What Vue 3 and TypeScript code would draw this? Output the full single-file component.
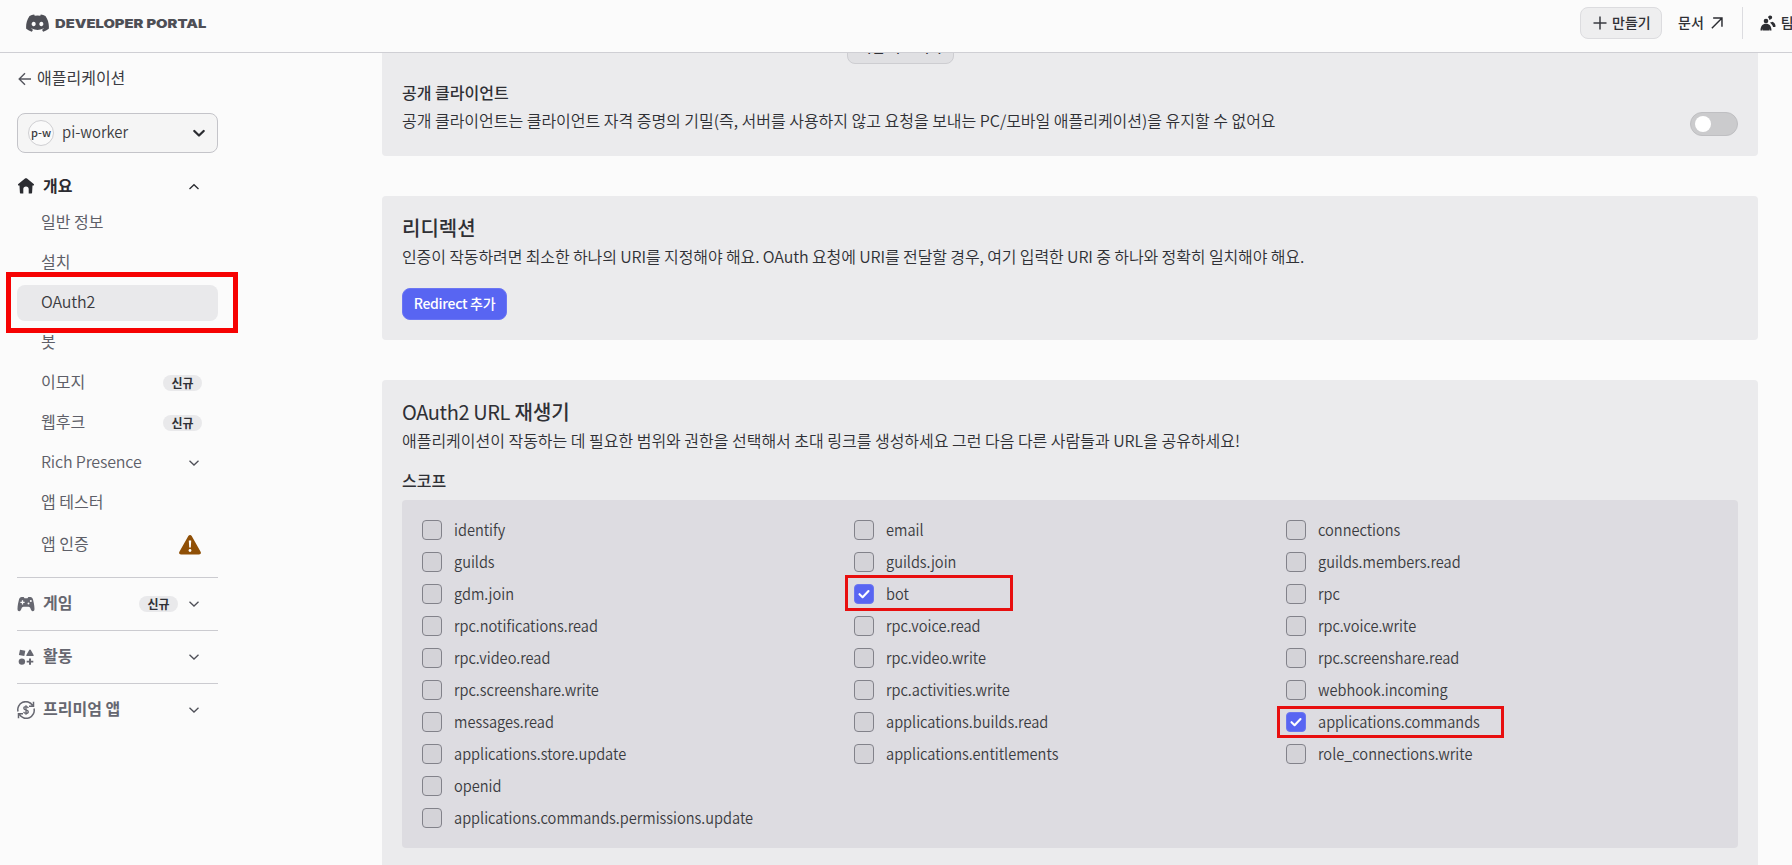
<script setup lang="ts">
import { ref } from 'vue'

interface NavItem {
  label: string
  active?: boolean
  latin?: boolean
  badge?: boolean
  chevron?: boolean
  warning?: boolean
}

interface Scope {
  name: string
  checked?: boolean
  mark?: 'bot' | 'commands'
}

const navItems: NavItem[] = [
  { label: '일반 정보' },
  { label: '설치' },
  { label: 'OAuth2', active: true, latin: true },
  { label: '봇' },
  { label: '이모지', badge: true },
  { label: '웹후크', badge: true },
  { label: 'Rich Presence', chevron: true, latin: true },
  { label: '앱 테스터' },
  { label: '앱 인증', warning: true },
]

const scopes = ref<Scope[][]>([
  [
    { name: 'identify' },
    { name: 'guilds' },
    { name: 'gdm.join' },
    { name: 'rpc.notifications.read' },
    { name: 'rpc.video.read' },
    { name: 'rpc.screenshare.write' },
    { name: 'messages.read' },
    { name: 'applications.store.update' },
    { name: 'openid' },
    { name: 'applications.commands.permissions.update' },
  ],
  [
    { name: 'email' },
    { name: 'guilds.join' },
    { name: 'bot', checked: true, mark: 'bot' },
    { name: 'rpc.voice.read' },
    { name: 'rpc.video.write' },
    { name: 'rpc.activities.write' },
    { name: 'applications.builds.read' },
    { name: 'applications.entitlements' },
  ],
  [
    { name: 'connections' },
    { name: 'guilds.members.read' },
    { name: 'rpc' },
    { name: 'rpc.voice.write' },
    { name: 'rpc.screenshare.read' },
    { name: 'webhook.incoming' },
    { name: 'applications.commands', checked: true, mark: 'commands' },
    { name: 'role_connections.write' },
  ],
])
</script>

<template>
  <div class="page">
    <header class="top">
      <div class="brand">
        <svg class="clyde" viewBox="0 0 24 18" width="23" height="18">
          <path fill="#4e4f56" d="M20.3 1.6A19 19 0 0 0 15.5.1c-.2.4-.5.9-.6 1.3a18 18 0 0 0-5.8 0C8.900 1 8.700.5 8.500.1A19 19 0 0 0 3.700 1.600C.6 6.200-.2 10.700.2 15.100a19 19 0 0 0 5.900 2.900c.5-.6.9-1.300 1.200-2-.7-.3-1.300-.6-1.900-.9l.5-.4a13.700 13.700 0 0 0 12.200 0l.5.4c-.6.3-1.300.6-1.900.9.3.7.8 1.400 1.200 2a19 19 0 0 0 5.900-2.900c.5-5.200-.8-9.600-3.500-13.500ZM8 12.500c-1.200 0-2.100-1.100-2.100-2.400S6.800 7.700 8 7.700s2.200 1.100 2.100 2.400c0 1.300-.9 2.400-2.100 2.400Zm8 0c-1.200 0-2.100-1.100-2.100-2.400s.9-2.400 2.100-2.400 2.200 1.100 2.100 2.400c0 1.300-.9 2.400-2.100 2.400Z" />
        </svg>
        <span class="wordmark">DEVELOPER PORTAL</span>
      </div>
      <nav class="tools">
        <button class="create">
          <svg width="14" height="14" viewBox="0 0 14 14"><path d="M7 .5v13M.5 7h13" stroke="#3a3b42" stroke-width="1.5" /></svg>
          <span>만들기</span>
        </button>
        <a class="docs">
          <span>문서</span>
          <svg width="12" height="12" viewBox="0 0 14 14"><path d="M1 13 12.300 1.700M2.500 1.200h10.300v10.300" fill="none" stroke="#2c2d32" stroke-width="1.700" /></svg>
        </a>
        <span class="rule"></span>
        <a class="team">
          <svg width="16" height="16" viewBox="0 0 16 16" fill="#2c2d32">
            <circle cx="6" cy="6" r="2.300" />
            <path d="M.5 15.500c0-4 2-6.700 5.500-6.700s5.500 2.700 5.500 6.700H9.800l-.4-2v2H2.700v-2l-.5 2Z" />
            <path d="M8.300 1.600a2 2 0 1 1 2.500 2.700L9.300 5C9.300 3.700 8.900 3 8.100 2.500ZM10 7.500c1 0 1.700-.4 2.400-.8 2 .8 3.200 2.600 3.200 4.600 0 .5-.4.7-.8.7h-1.700c-.5-1.600-1.400-2.900-3.100-4.500Z" />
          </svg>
          <span>팀</span>
        </a>
      </nav>
    </header>

    <div class="body">
      <aside class="side">
        <a class="back">
          <svg width="14" height="14" viewBox="0 0 14 14"><path d="M13 7H1.500M7 1.200 1.200 7 7 12.800" fill="none" stroke="#54555d" stroke-width="1.400" /></svg>
          <span>애플리케이션</span>
        </a>
        <div class="picker">
          <span class="avatar">p-w</span>
          <span class="app">pi-worker</span>
          <svg width="14" height="9" viewBox="0 0 14 9"><path d="M2.300 2 7 6.500 11.700 2" fill="none" stroke="#2b2c31" stroke-width="2.300" stroke-linecap="round" stroke-linejoin="round" /></svg>
        </div>

        <div class="group first">
          <svg class="gicon" width="18" height="18" viewBox="0 0 18 18" fill="#2b2c31"><path d="M9 1.200c.4 0 .7.1 1 .4l6.700 5.300c.7.600.3 1.600-.6 1.600h-.6l-.4 7c0 .6-.4 1-1 1h-2.400V12c0-1.600-1-2.600-2.700-2.600S6.300 10.400 6.300 12v4.500H3.900c-.6 0-1-.4-1-1l-.4-7h-.6c-.9 0-1.300-1-.6-1.600L8 1.600c.3-.3.600-.4 1-.4Z" /></svg>
          <span class="gname">개요</span>
          <svg class="chev" width="12" height="8" viewBox="0 0 12 8"><path d="M1.500 6 6 1.700 10.500 6" fill="none" stroke="#2b2c31" stroke-width="1.300" /></svg>
        </div>

        <ul class="items">
          <li v-for="item in navItems" :key="item.label" :class="{ active: item.active, tall: item.warning }">
            <span class="label" :class="{ latin: item.latin }">{{ item.label }}</span>
            <span v-if="item.badge" class="badge">신규</span>
            <svg v-if="item.chevron" class="chev" width="12" height="8" viewBox="0 0 12 8"><path d="M1.500 1.700 6 6l4.500-4.300" fill="none" stroke="#4f5058" stroke-width="1.300" /></svg>
            <svg v-if="item.warning" class="warn" width="22" height="20" viewBox="0 0 22 20">
              <path fill="#8f4f06" d="M9.300 1.100c.8-1.400 2.700-1.400 3.400 0l8.900 15.600c.8 1.400-.1 2.800-1.600 2.800H2c-1.500 0-2.400-1.400-1.600-2.800Z" />
              <path fill="#fff" d="M9.800 5.500h2.400l-.4 7h-1.600Z" /><circle cx="11" cy="15.500" r="1.400" fill="#fff" />
            </svg>
            <span v-if="item.active" class="mark mark-nav"></span>
          </li>
        </ul>

        <div class="group">
          <svg class="gicon" width="18" height="18" viewBox="0 0 18 18">
            <path fill="#666770" d="M4.700 2h2l.8 1.200h3L11.300 2h2c1.400 0 2.300 1 2.700 2.400.7 2.600 1.500 6.400 1.500 9.500 0 1.300-.7 2.300-1.700 2.300-1.400 0-1.800-1.200-2.300-2.600-.4-1.200-1-1.900-2-1.900h-5c-1 0-1.600.7-2 1.900-.5 1.400-.9 2.600-2.300 2.600-1 0-1.700-1-1.700-2.300 0-3.100.8-6.900 1.500-9.500C2.400 3 3.300 2 4.700 2Z" />
            <path d="M5.500 5.200v4.200M3.400 7.300h4.200" stroke="#fbfbfb" stroke-width="1.300" /><circle cx="13.800" cy="6" r="1" fill="#fbfbfb" /><circle cx="11.500" cy="8.500" r="1" fill="#fbfbfb" />
          </svg>
          <span class="gname">게임</span>
          <span class="badge">신규</span>
          <svg class="chev" width="12" height="8" viewBox="0 0 12 8"><path d="M1.500 1.700 6 6l4.500-4.300" fill="none" stroke="#4f5058" stroke-width="1.300" /></svg>
        </div>
        <div class="group">
          <svg class="gicon" width="18" height="18" viewBox="0 0 18 18" fill="#666770">
            <path d="m3 1.800 5.300.9-1 5.300L1.900 7ZM13 1.500c.4 0 .6.2.8.500l2.800 4.900c.3.600 0 1.100-.6 1.100h-6c-.6 0-.9-.5-.6-1.100l2.800-4.900c.2-.3.400-.5.800-.5ZM12 10.500h2v2.200h2.300v1.900H14v2.200h-2v-2.200H9.700v-1.900H12Z" />
            <circle cx="4.900" cy="13.600" r="3.200" />
          </svg>
          <span class="gname">활동</span>
          <svg class="chev" width="12" height="8" viewBox="0 0 12 8"><path d="M1.500 1.700 6 6l4.500-4.300" fill="none" stroke="#4f5058" stroke-width="1.300" /></svg>
        </div>
        <div class="group">
          <svg class="gicon" width="18" height="18" viewBox="0 0 18 18" fill="none" stroke="#666770" stroke-width="1.500">
            <path d="M1 10.500A8 8 0 0 1 15.500 4.300M16.500.8v4.400H12M17 7.500A8 8 0 0 1 2.500 13.700M1.500 17.200v-4.400H6" />
            <path d="M11.300 7c-.3-.9-1.200-1.300-2.300-1.300-1.300 0-2.200.6-2.200 1.600 0 2.300 4.500 1.100 4.500 3.400 0 1-1 1.700-2.300 1.700S6.900 11.800 6.600 10.900M9 4.300v9.400" stroke-width="1.300" />
          </svg>
          <span class="gname">프리미엄 앱</span>
          <svg class="chev" width="12" height="8" viewBox="0 0 12 8"><path d="M1.500 1.700 6 6l4.500-4.300" fill="none" stroke="#4f5058" stroke-width="1.300" /></svg>
        </div>
      </aside>

      <main class="main">
        <section class="card client">
          <div class="secret-row"><button class="reset">비밀 키 초기화</button></div>
          <div class="client-row">
            <div>
              <h5>공개 클라이언트</h5>
              <p class="d1">공개 클라이언트는 클라이언트 자격 증명의 기밀(즉, 서버를 사용하지 않고 요청을 보내는 PC/모바일 애플리케이션)을 유지할 수 없어요</p>
            </div>
            <span class="toggle"><i></i></span>
          </div>
        </section>

        <section class="card redirect">
          <h3>리디렉션</h3>
          <p class="d2">인증이 작동하려면 최소한 하나의 URI를 지정해야 해요. OAuth 요청에 URI를 전달할 경우, 여기 입력한 URI 중 하나와 정확히 일치해야 해요.</p>
          <button class="add">Redirect 추가</button>
        </section>

        <section class="card generator">
          <h3><span class="light">OAuth2 URL</span> 재생기</h3>
          <p class="d3">애플리케이션이 작동하는 데 필요한 범위와 권한을 선택해서 초대 링크를 생성하세요 그런 다음 다른 사람들과 URL을 공유하세요!</p>
          <h5>스코프</h5>
          <div class="scopes">
            <div v-for="(column, c) in scopes" :key="c" class="column">
              <label v-for="scope in column" :key="scope.name" class="scope" @click="scope.checked = !scope.checked">
                <span class="box" :class="{ on: scope.checked }">
                  <svg v-if="scope.checked" width="12" height="10" viewBox="0 0 12 10"><path d="M1.500 5.200 4.600 8.200 10.500 2" fill="none" stroke="#fff" stroke-width="2.100" stroke-linecap="round" stroke-linejoin="round" /></svg>
                </span>
                <span class="name">{{ scope.name }}</span>
                <span v-if="scope.mark" class="mark" :class="'mark-' + scope.mark"></span>
              </label>
            </div>
          </div>
        </section>
      </main>
    </div>
  </div>
</template>

<style>
body {
  overflow: hidden;
}
</style>

<style scoped>
.page {
  height: 865px;
  display: flex;
  flex-direction: column;
  overflow: hidden;
  background: #fbfbfb;
  color: #2f3035;
  font: 400 16px/20px 'Noto Sans CJK KR', 'Noto Sans', sans-serif;
}
.page * {
  box-sizing: border-box;
}
h3, h5, p, ul {
  margin: 0;
  padding: 0;
  font-weight: 400;
}
button {
  font: inherit;
  padding: 0;
}
.top {
  flex: none;
  height: 53px;
  border-bottom: 1px solid #cfcfd4;
  display: flex;
  justify-content: space-between;
  padding-left: 26px;
  overflow: hidden;
}
.brand {
  display: flex;
  align-items: center;
  height: 46px;
  gap: 6px;
  white-space: nowrap;
}
.wordmark {
  padding-top: 1px;
  font: 900 12px/16px Inter, sans-serif;
  color: #4e4f56;
  transform: scaleX(1.23);
  transform-origin: left center;
}
.tools {
  flex: none;
  width: 212px;
  height: 46px;
  display: flex;
  align-items: center;
  font-size: 14px;
  font-weight: 500;
  white-space: nowrap;
}
.tools span {
  margin-top: -2px;
}
.create {
  flex: none;
  width: 82px;
  height: 32px;
  display: flex;
  align-items: center;
  gap: 5px;
  padding-left: 12px;
  border: 1px solid #dcdcdf;
  border-radius: 8px;
  background: #eeeeef;
  color: inherit;
}
.docs {
  display: flex;
  align-items: center;
  gap: 7px;
  margin-left: 16px;
}
.tools .rule {
  flex: none;
  width: 1px;
  height: 32px;
  margin: 0 0 0 19px;
  background: #dcdce0;
}
.team {
  display: flex;
  align-items: center;
  gap: 5px;
  margin-left: 17px;
}
.body {
  flex: 1;
  min-height: 0;
  display: flex;
}
.side {
  flex: none;
  width: 218px;
  padding: 15px 0 0 17px;
  color: #5e5f68;
}
.back {
  display: flex;
  align-items: center;
  gap: 5px;
  height: 20px;
  padding: 1px 0 0 1px;
  color: #3b3c42;
}
.back span,
.app {
  margin-top: -4px;
}
.picker {
  display: flex;
  align-items: center;
  height: 40px;
  margin-top: 25px;
  padding: 0 11px 0 10px;
  border: 1px solid #c4c4c9;
  border-radius: 8px;
  background: #f5f5f5;
  color: #3a3b40;
}
.avatar {
  width: 26px;
  height: 26px;
  padding-bottom: 2px;
  border: 1px solid #cfcfd2;
  border-radius: 50%;
  display: flex;
  align-items: center;
  justify-content: center;
  font-size: 11px;
  font-weight: 500;
  background: #fafafa;
}
.app {
  flex: 1;
  margin-left: 8px;
  font-weight: 350;
  transform: scaleX(0.93);
  transform-origin: left center;
}
.group {
  display: flex;
  align-items: center;
  height: 53px;
  padding-right: 18px;
  border-top: 1px solid #cbcbd0;
  color: #666770;
  font-weight: 700;
}
.group.first {
  height: 36px;
  margin-top: 15px;
  border: 0;
  color: #2b2c31;
}
.gname {
  flex: 1;
  margin: -4px 0 0 8px;
}
.group.first .gname {
  margin-top: -2px;
}
.group.first .chev {
  margin-top: 1px;
}
.badge {
  width: 39px;
  height: 16px;
  border-radius: 8px;
  background: #e9e9eb;
  color: #303136;
  font-size: 12px;
  line-height: 15px;
  font-weight: 700;
  text-align: center;
}
.group .badge {
  margin-right: 10px;
}
.items {
  list-style: none;
  margin-bottom: 12px;
}
.items li {
  position: relative;
  display: flex;
  align-items: center;
  justify-content: space-between;
  height: 36px;
  margin: 0 0 4px;
  padding: 0 18px 0 24px;
  border-radius: 8px;
}
.items li:first-child {
  margin-top: 1px;
}
.items .tall {
  height: 40px;
}
.items .label {
  margin-top: -5px;
}
.items .latin {
  font-weight: 350;
  letter-spacing: -0.17px;
}
.items li .badge {
  margin-right: -2px;
}
.warn {
  margin-right: -1px;
}
.items .active {
  background: #e9e9eb;
  color: #3a3b40;
}
.mark {
  position: absolute;
  border: 3px solid #e80f0f;
  pointer-events: none;
}
.mark-nav {
  left: -11px;
  top: -13px;
  width: 232px;
  height: 61px;
  border: 5px solid #f60202;
}
.mark-bot {
  left: -9px;
  top: -9px;
  width: 168px;
  height: 36px;
}
.mark-commands {
  left: -9px;
  top: -6px;
  width: 227px;
  height: 32px;
}
.main {
  flex: none;
  width: 1376px;
  margin-left: 164px;
  display: flex;
  flex-direction: column;
  gap: 40px;
  overflow: hidden;
}
.card {
  flex: none;
  padding: 20px;
  border-radius: 4px;
  background: #ebebed;
  white-space: nowrap;
}
.card p {
  font-weight: 350;
  letter-spacing: -0.02px;
}
.card .d2 {
  letter-spacing: -0.115px;
}
.client {
  height: 103px;
  padding-top: 0;
  border-radius: 0 0 4px 4px;
}
.secret-row {
  height: 11px;
  display: flex;
  align-items: flex-end;
  padding-left: 445px;
}
.reset {
  flex: none;
  width: 107px;
  height: 32px;
  padding-bottom: 5px;
  border: 1px solid #cdcdd1;
  border-radius: 8px;
  background: #e0e0e3;
  color: #2f3035;
  font-size: 14px;
  line-height: 20px;
  font-weight: 500;
}
.client-row {
  display: flex;
  justify-content: space-between;
}
h5 {
  font-size: 16px;
  font-weight: 500;
}
.client h5 {
  margin-top: 18px;
}
.client p {
  margin-top: 8px;
}
.toggle {
  width: 48px;
  height: 24px;
  margin-top: 48px;
  padding: 3px 4px;
  border: 1px solid #bfbfc2;
  border-radius: 12px;
  background: #cbcbcd;
}
.toggle i {
  display: block;
  width: 16px;
  height: 16px;
  border-radius: 50%;
  background: #fff;
}
.redirect {
  height: 144px;
}
h3 {
  font-size: 20px;
  line-height: 24px;
  font-weight: 500;
}
.light {
  font-weight: 400;
  letter-spacing: -0.4px;
}
.card h3 + p {
  margin-top: 6px;
}
.add {
  display: block;
  width: 105px;
  height: 32px;
  margin-top: 22px;
  padding-bottom: 2px;
  border: 1px solid #6b76f3;
  border-radius: 8px;
  background: #5865f2;
  color: #fff;
  font-size: 14px;
  font-weight: 500;
  letter-spacing: -0.3px;
}
.generator {
  height: 520px;
}
.generator h5 {
  margin-top: 20px;
}
.scopes {
  display: grid;
  grid-template-columns: repeat(3, 432px);
  height: 348px;
  margin-top: 10px;
  padding: 20px;
  border-radius: 4px;
  background: #dddce1;
}
.column {
  display: flex;
  flex-direction: column;
  gap: 12px;
}
.scope {
  position: relative;
  display: flex;
  align-items: center;
  gap: 12px;
  height: 20px;
  color: #3a3b40;
}
.name {
  margin-top: -3px;
  font-weight: 350;
  transform: scaleX(0.911);
  transform-origin: left center;
}
.box {
  width: 20px;
  height: 20px;
  display: flex;
  align-items: center;
  justify-content: center;
  border: 1px solid #82828a;
  border-radius: 4px;
  background: #d4d3d8;
}
.box.on {
  border-color: #6b76f0;
  background: #5865f2;
}
</style>
